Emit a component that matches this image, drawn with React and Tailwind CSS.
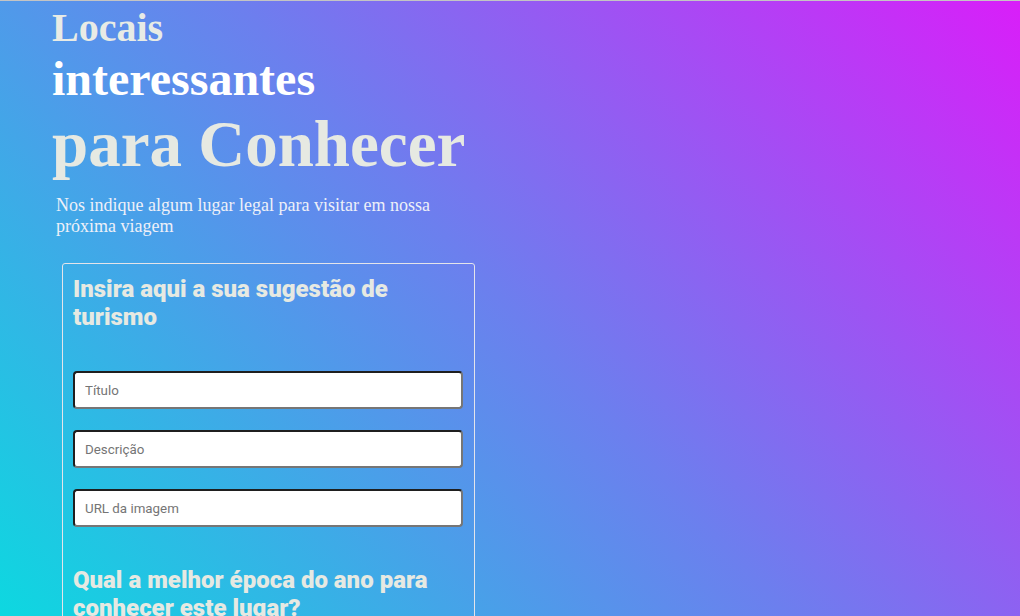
import React from "react";

export default function App() {
  const serif = "font-['Liberation_Serif','Times_New_Roman',serif]";
  const inputCls =
    "block w-[390px] h-[38px] rounded-[4px] bg-white px-[10px] text-[13.33px] text-black placeholder:text-[#757575] border-2 border-t-[#1f1f1f] border-l-[#1f1f1f] border-b-[#767676] border-r-[#767676] outline-none font-['Roboto',Arial,sans-serif]";
  return (
    <div className="min-h-screen h-[616px] overflow-hidden bg-fixed bg-[linear-gradient(48deg,#0dd8e0_0%,#6c7fee_50%,#d91ef9_100%)] border-t border-[#c4c4c4]">
      <div className="pl-[52px] pt-[4px]">
        <h1 className={`${serif} font-bold text-[40px] leading-[46px] text-[#e8ebe5]`}>Locais</h1>
        <h1 className={`${serif} font-bold text-[48px] leading-[55px] text-white`}>interessantes</h1>
        <h1 className={`${serif} font-bold text-[65px] leading-[77px] text-[#e6e9e2]`}>para Conhecer</h1>
        <p className={`${serif} mt-[12px] ml-[4px] w-[400px] text-[18px] leading-[20.7px] text-[#eef0f8]`}>
          Nos indique algum lugar legal para visitar em nossa próxima viagem
        </p>
      </div>
      <div className="ml-[62px] mt-[27px] w-[413px] rounded-[3px] border border-[#e4e4ea] px-[10px] pt-[11px] pb-[20px]">
        <h2 className="font-['Roboto',sans-serif] font-black text-[24px] leading-[28px] text-[#e6e9e2]">
          Insira aqui a sua sugestão de turismo
        </h2>
        <div className="mt-[40px] flex flex-col gap-[21px]">
          <input className={inputCls} placeholder="Título" />
          <input className={inputCls} placeholder="Descrição" />
          <input className={inputCls} placeholder="URL da imagem" />
        </div>
        <h2 className="mt-[39px] font-['Roboto',sans-serif] font-black text-[24px] leading-[28px] text-[#e6e9e2]">
          Qual a melhor época do ano para conhecer este lugar?
        </h2>
      </div>
    </div>
  );
}
